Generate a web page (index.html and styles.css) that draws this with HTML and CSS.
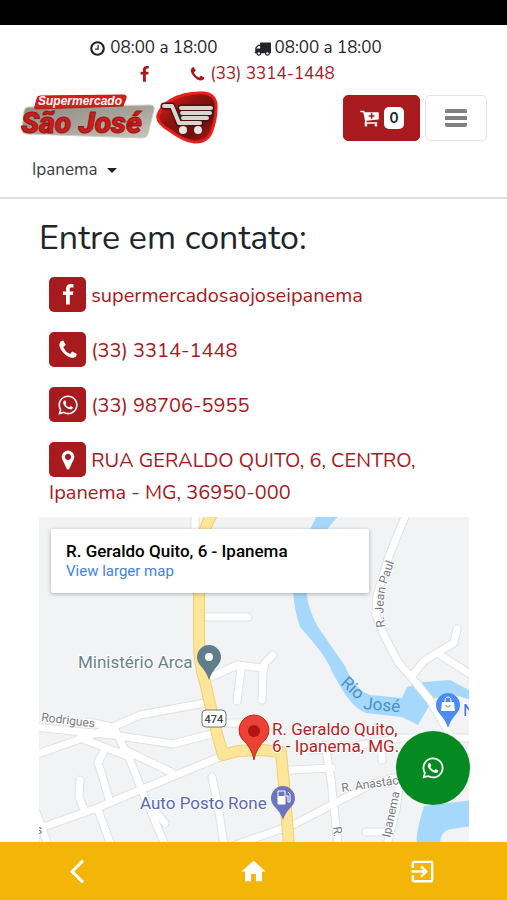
FILE: index.html
```html
<!DOCTYPE html>
<html lang="pt-BR">
<head>
<meta charset="utf-8">
<meta name="viewport" content="width=device-width, initial-scale=1">
<title>Supermercado São José</title>
<link rel="stylesheet" href="styles.css">
</head>
<body>
<svg class="defs" aria-hidden="true">
  <symbol id="i-facebook" viewBox="0 0 1792 1792"><path d="M1343 12v264h-157q-86 0-116 36t-30 108v189h293l-39 296h-254v759h-306v-759h-255v-296h255v-218q0-186 104-288.5t277-102.5q147 0 228 12z"/></symbol>
  <symbol id="i-phone" viewBox="0 0 1792 1792"><path d="M1600 1240q0 27-10 70.5t-21 68.5q-21 50-122 106-94 51-186 51-27 0-52.5-3.5t-57.5-12.5-47.5-14.5-55.5-20.5-49-18q-98-35-175-83-128-79-264.5-215.5t-215.5-264.5q-48-77-83-175-3-9-18-49t-20.5-55.5-14.5-47.5-12.5-57.5-3.5-52.5q0-92 51-186 56-101 106-122 25-11 68.5-21t70.5-10q14 0 21 3 18 6 53 76 11 19 30 54t35 63.5 31 53.5q3 4 17.5 25t21.5 35.5 7 28.5q0 20-28.5 50t-62 55-62 53-28.5 46q0 9 5 22.5t8.5 20.5 14 24 11.5 19q76 137 174 235t235 174q2 1 19 11.5t24 14 20.5 8.5 22.5 5q18 0 46-28.5t53-62 55-62 50-28.5q14 0 28.5 7t35.5 21.5 25 17.5q25 15 53.5 31t63.5 35 54 30q70 35 76 53 3 7 3 21z"/></symbol>
  <symbol id="i-marker" viewBox="0 0 1792 1792"><path d="M1152 640q0-106-75-181t-181-75-181 75-75 181 75 181 181 75 181-75 75-181zm256 0q0 109-33 179l-364 774q-16 33-47.5 52t-67.5 19-67.5-19-46.5-52l-365-774q-33-70-33-179 0-212 150-362t362-150 362 150 150 362z"/></symbol>
  <symbol id="i-clock" viewBox="0 0 1792 1792"><path d="M1024 544v448q0 14-9 23t-23 9h-320q-14 0-23-9t-9-23v-64q0-14 9-23t23-9h224v-352q0-14 9-23t23-9h64q14 0 23 9t9 23zm416 352q0-148-73-273t-198-198-273-73-273 73-198 198-73 273 73 273 198 198 273 73 273-73 198-198 73-273zm224 0q0 209-103 385.5t-279.5 279.5-385.5 103-385.5-103-279.5-279.5-103-385.5 103-385.5 279.5-279.5 385.5-103 385.5 103 279.5 279.5 103 385.5z"/></symbol>
  <symbol id="i-truck" viewBox="0 0 1792 1792"><path d="M640 1408q0-52-38-90t-90-38-90 38-38 90 38 90 90 38 90-38 38-90zm-384-512h384v-256h-158q-13 0-22 9l-195 195q-9 9-9 22v30zm1280 512q0-52-38-90t-90-38-90 38-38 90 38 90 90 38 90-38 38-90zm256-1088v1024q0 15-4 26.5t-13.5 18.5-16.5 11.5-23.5 6-22.5 2-25.5 0-22.5-.5q0 106-75 181t-181 75-181-75-75-181h-384q0 106-75 181t-181 75-181-75-75-181h-64q-3 0-22.5.5t-25.5 0-22.5-2-23.5-6-16.5-11.5-13.5-18.5-4-26.5q0-26 19-45t45-19v-320q0-8-.5-35t0-38 2.5-34.5 6.5-37 14-30.5 22.5-30l198-198q19-19 50.5-32t58.5-13h160v-192q0-26 19-45t45-19h1024q26 0 45 19t19 45z"/></symbol>
  <symbol id="i-whatsapp" viewBox="0 0 448 512"><path d="M380.9 97.1C339 55.1 283.2 32 223.9 32c-122.4 0-222 99.6-222 222 0 39.1 10.2 77.3 29.6 111L0 480l117.7-30.9c32.4 17.7 68.9 27 106.1 27h.1c122.3 0 224.1-99.6 224.1-222 0-59.3-25.2-115-67.1-157zm-157 341.6c-33.2 0-65.7-8.9-94-25.7l-6.7-4-69.8 18.3L72 359.2l-4.4-7c-18.5-29.4-28.2-63.3-28.2-98.2 0-101.7 82.8-184.5 184.6-184.5 49.3 0 95.6 19.2 130.4 54.1 34.8 34.9 56.2 81.2 56.1 130.5 0 101.8-84.9 184.6-186.6 184.6zm101.2-138.2c-5.5-2.8-32.8-16.2-37.9-18-5.1-1.9-8.8-2.8-12.5 2.8-3.7 5.6-14.3 18-17.6 21.8-3.2 3.7-6.5 4.2-12 1.4-32.6-16.3-54-29.1-75.5-66-5.7-9.8 5.7-9.1 16.3-30.3 1.8-3.7.9-6.9-.5-9.7-1.4-2.8-12.5-30.1-17.1-41.2-4.5-10.8-9.1-9.3-12.5-9.5-3.2-.2-6.9-.2-10.6-.2-3.7 0-9.7 1.4-14.8 6.9-5.1 5.6-19.4 19-19.4 46.3 0 27.3 19.9 53.7 22.6 57.4 2.8 3.7 39.1 59.7 94.8 83.8 35.2 15.2 49 16.5 66.6 13.9 10.7-1.6 32.8-13.4 37.4-26.4 4.6-13 4.6-24.1 3.2-26.4-1.3-2.5-5-3.9-10.5-6.6z"/></symbol>
  <symbol id="i-cart" viewBox="0 0 1792 1792"><path d="M704 1536q0 52-38 90t-90 38-90-38-38-90 38-90 90-38 90 38 38 90zm896 0q0 52-38 90t-90 38-90-38-38-90 38-90 90-38 90 38 38 90zm128-1088v512q0 24-16.5 42.5t-40.5 21.5l-1044 122q13 60 13 70 0 16-24 64h920q26 0 45 19t19 45-19 45-45 19h-1024q-26 0-45-19t-19-45q0-11 8-31.5t16-36 21.5-40 15.5-29.5l-177-823h-204q-26 0-45-19t-19-45 19-45 45-19h256q16 0 28.5 6.5t19.5 15.5 13 24.5 8 26 5.5 29.5 4.5 26h1201q26 0 45 19t19 45z"/><path d="M1088 500v420M878 710h420" stroke="#a71a1d" stroke-width="140" stroke-linecap="round"/></symbol>
</svg>

<div class="app">
  <div class="statusbar"></div>

  <header class="header">
    <div class="info">
      <span class="info-item"><svg class="icon"><use href="#i-clock"/></svg>08:00 a 18:00</span>
      <span class="info-item"><svg class="icon"><use href="#i-truck"/></svg>08:00 a 18:00</span>
    </div>
    <div class="info">
      <a class="info-item" href="#facebook" aria-label="Facebook"><svg class="icon"><use href="#i-facebook"/></svg></a>
      <a class="info-item" href="#telefone"><svg class="icon"><use href="#i-phone"/></svg>(33) 3314-1448</a>
    </div>

    <div class="brandbar">
      <a class="logo" href="#inicio" aria-label="Supermercado São José">
        <svg viewBox="0 0 200 54">
          <defs>
            <linearGradient id="plate" x1="0" y1="0" x2="1" y2="1"><stop offset="0" stop-color="#8f8c84"/><stop offset=".5" stop-color="#a5a298"/><stop offset="1" stop-color="#c9c7bd"/></linearGradient>
            <linearGradient id="badge" x1="0" y1="0" x2="1" y2="1"><stop offset="0" stop-color="#f0221c"/><stop offset=".4" stop-color="#8d1210"/><stop offset=".7" stop-color="#6d100f"/><stop offset="1" stop-color="#c91712"/></linearGradient>
          </defs>
          <path d="M8 16 130 14Q135 14 134 19L128 43Q127 47 122 47L6 43Q2 43 2 39L4 20Q5 16 8 16Z" fill="url(#plate)" stroke="#d3d0c7"/>
          <path d="M20 5 103 4Q107 4 106 7L103 15 16 18Q14 18 15 15L17 8Q17 5 20 5Z" fill="#d81e1c" stroke="#b81816"/>
          <text class="logo-small" x="18" y="14">Supermercado</text>
          <text class="logo-big" x="1" y="42">São José</text>
          <path d="M138 24Q141 15 151 9 165 1 184 2 194 3 196 12 197 27 191 42 186 52 174 51 164 50 149 39 136 31 138 24Z" fill="url(#badge)" stroke="#e8201b" stroke-width="3"/>
          <g stroke-linecap="round" stroke-linejoin="round" fill="none">
            <path d="M144 15h8l7 17h21M161 17h30M162 22h28M163 27h24" stroke="#4d1210" stroke-width="7"/>
            <path d="M144 15h8l7 17h21M161 17h30M162 22h28M163 27h24" stroke="#d8d6d0" stroke-width="4"/>
          </g>
          <circle cx="163" cy="39" r="4" fill="#e8e6e2"/><circle cx="178" cy="39" r="4" fill="#e8e6e2"/>
        </svg>
      </a>
      <div class="actions">
        <button class="btn btn-cart" type="button" aria-label="Carrinho"><svg class="icon-cart"><use href="#i-cart"/></svg><span class="count">0</span></button>
        <button class="btn btn-menu" type="button" aria-label="Menu"><span class="bars"></span></button>
      </div>
    </div>

    <label class="store">
      <select aria-label="Loja"><option>Ipanema</option></select>
    </label>
  </header>

  <main class="main">
    <h1>Entre em contato:</h1>
    <ul class="contacts">
      <li><a href="#facebook"><span class="tile"><svg><use href="#i-facebook"/></svg></span> supermercadosaojoseipanema</a></li>
      <li><a href="#telefone"><span class="tile"><svg><use href="#i-phone"/></svg></span> (33) 3314-1448</a></li>
      <li><a href="#whatsapp"><span class="tile"><svg><use href="#i-whatsapp"/></svg></span> (33) 98706-5955</a></li>
      <li><a href="#endereco"><span class="tile"><svg><use href="#i-marker"/></svg></span> RUA GERALDO QUITO, 6, CENTRO, Ipanema - MG, 36950-000</a></li>
    </ul>

    <section class="map" aria-label="Mapa">
      <svg class="map-canvas" viewBox="39 517 430 325" preserveAspectRatio="xMidYMin slice">
        <defs>
          <g id="roads">
            <path d="M195 516V535M407 512 389 556 377 595 376 615 384 635 398 662 412 678 430 700 450 735"/>
            <path d="M412 676 424 661 437 653 454 643 457 629M437 653 473 676"/>
            <path d="M205 617H248"/>
            <path d="M211 677 237 665 241 670 237 701M237 665 263 668 262 700M263 672 265 663 273 655"/>
            <path d="M35 755 83 738 113 727 140 715 205 703"/>
            <path d="M35 727 83 732 113 735 173 744 215 733M88 722 112 727"/>
            <path d="M80 738 130 757M123 749 173 773"/>
            <path d="M35 830 97 808 140 790 220 757"/>
            <path d="M115 730 130 760 143 793 165 845M147 802 165 823"/>
            <path d="M103 753 98 762 110 802M80 780 79 797 85 812M98 810 111 845M36 812 48 845"/>
            <path d="M212 777 218 805 224 845M227 723H245"/>
            <path d="M235 845 293 825 337 802 370 785 400 776"/>
            <path d="M289 770 332 768M325 745 331 780 338 845"/>
            <path d="M310 750 345 748 400 738 473 738M382 745V760"/>
            <path d="M400 780 396 810 387 845M366 832H383"/>
          </g>
          <path id="highway" d="M213 512Q199 535 199 575V640Q199 665 205 682L216 730 223 755 238 751 262 750 281 752 284 785 289 845"/>
          <path id="jean-paul" d="M385 627Q381 600 388 580T402 540"/>
        </defs>
        <path class="ground" d="M39 516h430v400H39z"/>
        <g class="water">
          <path d="M319 512h24Q330 524 325 533H308Z"/>
          <path d="M293 590H306Q308 610 318 627L345 666Q355 690 370 695L402 698 407 687 424 682 450 680 473 692V700L450 694 433 699 418 725 402 717 366 713Q352 708 339 684L332 672Q328 658 300 627 294 610 293 590Z"/>
          <path d="M424 806Q415 835 417 845H440Q440 830 452 829L473 826V800Z"/>
        </g>
        <use href="#roads" class="road-edge"/>
        <use href="#roads" class="road"/>
        <use href="#highway" class="highway-edge"/>
        <use href="#highway" class="highway"/>

        <rect x="202" y="710" width="24" height="17" rx="4" fill="#fff" stroke="#777" stroke-width="1"/>
        <text class="shield" x="214" y="723" text-anchor="middle">474</text>

        <text class="street" transform="translate(41 721) rotate(7)">Rodrigues</text>
        <text class="street"><textPath href="#jean-paul">R. Jean Paul</textPath></text>
        <text class="street" transform="translate(342 792) rotate(-8)">R. Anastác</text>
        <text class="street" transform="translate(390 838) rotate(-78)">Ipanema</text>
        <text class="street" transform="translate(333 827) rotate(84)">R.</text>
        <text class="street" x="36" y="834">s</text>
        <text class="river" transform="translate(340 684) rotate(42)">Rio</text>
        <text class="river" transform="translate(363 709) rotate(5)">José</text>

        <text class="place gov" x="78" y="668">Ministério Arca</text>
        <path d="M209 680Q207 673 200 665A12 12 0 1 1 218 665Q211 673 209 680Z" fill="#607d8b"/><circle cx="209" cy="657" r="4" fill="#fff"/>
        <text class="place gas" x="140" y="809">Auto Posto Rone</text>
        <path d="M283 820Q281 813 274 806A12 12 0 1 1 292 806Q285 813 283 820Z" fill="#6c76c0"/>
        <path d="M278 791h7v13h-7zM286 796h2v6h2v-8l-2-2" fill="none" stroke="#fff" stroke-width="1"/><path d="M278 796h7v8h-7z" fill="#fff"/>
        <path d="M448 728Q446 721 439 713A12 12 0 1 1 457 713Q450 721 448 728Z" fill="#4a8cf0"/>
        <path d="M442 702h12l1 9h-14z" fill="#fff"/><path d="M445 702v-2a3 3 0 0 1 6 0v2" fill="none" stroke="#fff" stroke-width="1"/><path d="M446 705a2 2 0 0 0 4 0" fill="none" stroke="#4a8cf0"/>
        <text class="place shop" x="463" y="716">N</text>

        <path d="M254 760Q252 748 242 739A15 15 0 1 1 266 739Q256 748 254 760Z" fill="#ea4335" stroke="#c5281c"/><circle cx="254" cy="731" r="6" fill="#b31412"/>
        <text class="place pin" x="272" y="735">R. Geraldo Quito,</text>
        <text class="place pin" x="272" y="752">6 - Ipanema, MG.</text>
      </svg>
      <div class="map-card">
        <strong>R. Geraldo Quito, 6 - Ipanema</strong>
        <a href="#mapa">View larger map</a>
      </div>
    </section>
  </main>

  <nav class="tabbar" aria-label="Navegação">
    <a href="#voltar" aria-label="Voltar"><svg viewBox="0 0 24 24"><path d="M11.67 3.87L9.9 2.1 0 12l9.9 9.9 1.77-1.77L3.54 12z"/></svg></a>
    <a href="#inicio" aria-label="Início"><svg viewBox="0 0 24 24"><path d="M10 20v-6h4v6h5v-8h3L12 3 2 12h3v8z"/></svg></a>
    <a href="#sair" aria-label="Sair"><svg viewBox="0 0 24 24"><path d="M10.09 15.59L11.5 17l5-5-5-5-1.41 1.41L12.67 11H3v2h9.67l-2.58 2.59zM19 3H5c-1.11 0-2 .9-2 2v4h2V5h14v14H5v-4H3v4c0 1.1.89 2 2 2h14c1.1 0 2-.9 2-2V5c0-1.1-.9-2-2-2z"/></svg></a>
  </nav>

  <a class="fab" href="#whatsapp" aria-label="WhatsApp"><svg><use href="#i-whatsapp"/></svg></a>
</div>
</body>
</html>
```
FILE: styles.css
```css
* { box-sizing: border-box; }

body {
  margin: 0;
  background: #fff;
  color: #212529;
  font-family: Nunito, Lato, "Open Sans", sans-serif;
  font-size: 17px;
  line-height: 26px;
}

a { color: #a71a1d; text-decoration: none; }
svg { fill: currentColor; }
.defs { position: absolute; width: 0; height: 0; }

.app {
  position: relative;
  display: flex;
  flex-direction: column;
  height: 100vh;
  overflow: hidden;
}

.statusbar { height: 25px; background: #000; flex: none; }

/* Header */
.header {
  flex: none;
  padding: 10px 20px 14px;
  border-bottom: 2px solid #dedede;
}
.info {
  display: flex;
  justify-content: center;
  gap: 36px;
  padding-right: 36px;
}
.info-item { display: flex; align-items: center; gap: 4px; }
.icon { width: 17px; height: 17px; }

.brandbar {
  display: flex;
  justify-content: space-between;
  align-items: center;
  margin-top: 4px;
}
.logo { width: 200px; }
.logo svg { display: block; width: 100%; }
.logo-small { font: italic bold 12px "Liberation Sans", sans-serif; fill: #fff; }
.logo-big { font: italic 900 30px Roboto, sans-serif; fill: #c91d1b; stroke: #971412; stroke-width: 1px; }

.actions { display: flex; gap: 5px; }
.btn {
  display: flex;
  align-items: center;
  justify-content: center;
  height: 46px;
  border-radius: 5px;
  border: 1px solid #a71a1d;
  font: inherit;
  padding: 0 15px;
}
.btn-cart { background: #a71a1d; color: #fff; gap: 4px; }
.icon-cart { width: 21px; height: 20px; }
.count {
  width: 20px;
  background: #fff;
  color: #212529;
  border-radius: 5px;
  font-size: 15px;
  font-weight: 700;
  line-height: 22px;
}
.btn-menu { background: #fff; border-color: #e4e4e4; width: 62px; }
.bars {
  width: 22px;
  height: 18px;
  border-radius: 2px;
  background: linear-gradient(#808080 4px, transparent 4px 7px, #808080 7px 11px, transparent 11px 14px, #808080 14px);
}

.store { display: inline-flex; align-items: center; gap: 9px; margin: 12px 0 0 12px; }
.store select {
  appearance: none;
  border: 0;
  padding: 0;
  background: none;
  color: #3a3d40;
  font: inherit;
}
.store::after {
  content: "";
  border: 5px solid transparent;
  border-top-color: #212529;
  border-bottom: 0;
}

/* Contact page */
.main {
  flex: 1;
  min-height: 0;
  display: flex;
  flex-direction: column;
  padding: 18px 38px 0 39px;
}
h1 { margin: 0 0 18px; font-size: 34px; font-weight: 400; line-height: 42px; }
.contacts { list-style: none; margin: 0 0 8px; padding: 0 10px; font-size: 20px; line-height: 32px; }
.contacts li { margin-bottom: 20px; }
.contacts li:last-child { margin-bottom: 0; }
.tile {
  display: inline-flex;
  align-items: center;
  justify-content: center;
  width: 37px;
  height: 35px;
  border-radius: 5px;
  background: #a71a1d;
  color: #fff;
  vertical-align: -4px;
}
.tile svg { width: 22px; height: 22px; }

.map { position: relative; flex: 1; min-height: 0; overflow: hidden; background: #f1f3f4; }
.map-canvas { display: block; width: 100%; height: 100%; }
.ground { fill: #f1f3f4; }
.water { fill: #a6d8fb; }
.road, .road-edge, .highway, .highway-edge { fill: none; stroke-linecap: round; stroke-linejoin: round; }
.road-edge { stroke: #dfe1e3; stroke-width: 9px; }
.road { stroke: #fff; stroke-width: 7px; }
.highway-edge { stroke: #f3cf72; stroke-width: 12px; }
.highway { stroke: #fde599; stroke-width: 10px; }
.map text { font-family: Roboto, sans-serif; paint-order: stroke; stroke: #fff; stroke-width: 2px; stroke-linejoin: round; }
.street { font-size: 12px; fill: #77797c; }
.shield { font-size: 11px; font-weight: 500; fill: #444; }
.map .river { font-size: 17px; fill: #4a8fcd; stroke: none; }
.place { font-size: 17px; }
.gov { fill: #6c8188; }
.gas { fill: #5c67b8; }
.shop { fill: #3a76dd; }
.pin { fill: #b9211d; }

.map-card {
  position: absolute;
  top: 12px;
  left: 12px;
  width: 318px;
  max-width: calc(100% - 24px);
  padding: 12px 15px;
  background: #fff;
  border-radius: 2px;
  box-shadow: 0 1px 4px rgba(0, 0, 0, .3);
  font: 15px/20px Roboto, sans-serif;
}
.map-card strong { display: block; color: #000; font-size: 17px; font-weight: 500; }
.map-card a { color: #427fed; }

/* Bottom navigation */
.tabbar { flex: none; display: grid; grid-template-columns: repeat(3, 1fr); height: 58px; background: #f3b507; }
.tabbar a { display: flex; align-items: center; justify-content: center; color: #fff; }
.tabbar svg { width: 29px; height: 29px; }

.fab {
  position: absolute;
  right: 37px;
  bottom: 95px;
  width: 74px;
  height: 74px;
  border-radius: 50%;
  background: #048a20;
  color: #fff;
  display: flex;
  align-items: center;
  justify-content: center;
}
.fab svg { width: 24px; height: 24px; }
```
